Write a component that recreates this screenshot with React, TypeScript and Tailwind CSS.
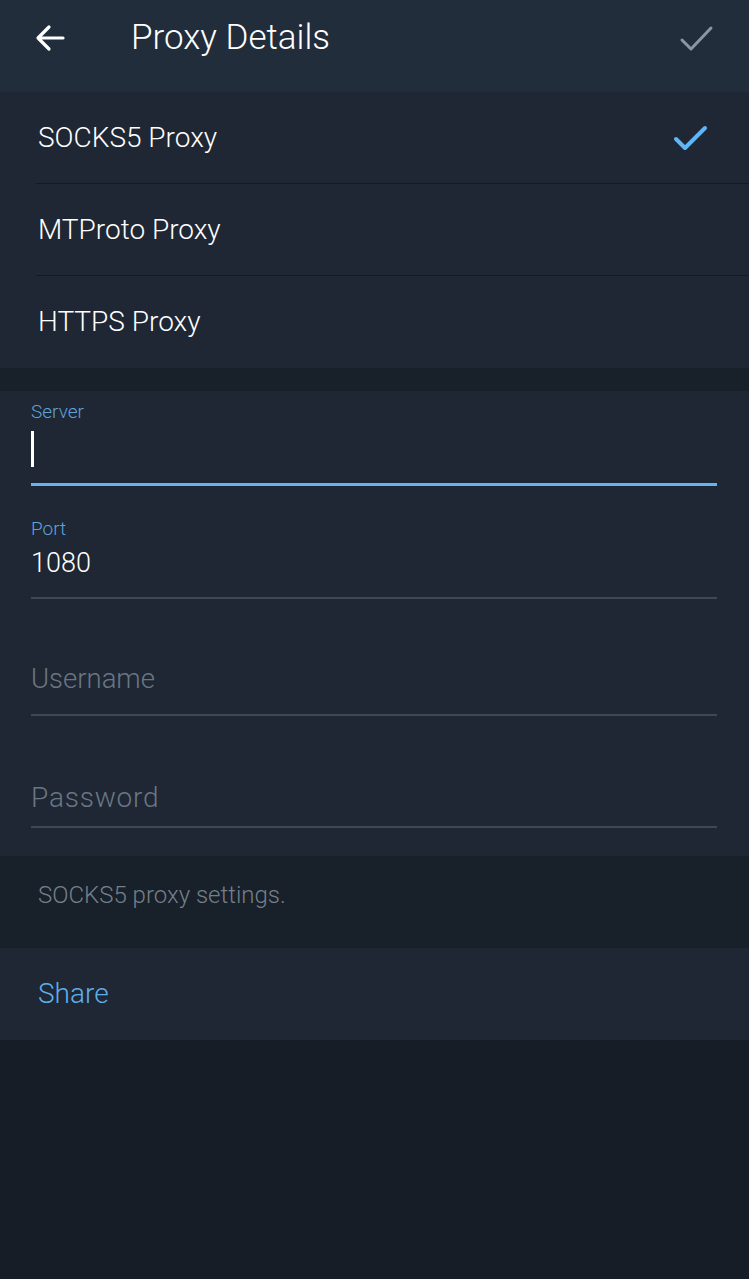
import React from "react";

const font = { fontFamily: "Roboto, 'Noto Sans', sans-serif" };

function Row({ label, checked, divider }: { label: string; checked?: boolean; divider?: boolean }) {
  return (
    <div className="relative flex h-[92px] items-center pl-[38px] pr-[40px]">
      <span className="flex-1 text-[28px] font-light text-white">{label}</span>
      {checked && (
        <svg width="36" height="28" viewBox="0 0 36 28">
          <path d="M3 15 L12 24 L32 4" fill="none" stroke="#5eb5f7" strokeWidth="4" strokeLinecap="round" strokeLinejoin="round" />
        </svg>
      )}
      {divider && <div className="absolute bottom-0 left-[36px] right-0 h-px bg-[#121a23]" />}
    </div>
  );
}

export default function App() {
  return (
    <div className="flex min-h-[1279px] w-[749px] flex-col bg-[#161d26]" style={font}>
      {/* Header */}
      <div className="flex h-[92px] items-center bg-[#212d3b] pb-[16px]">
        <div className="flex w-[131px] items-center pl-[34px]">
          <svg width="32" height="30" viewBox="0 0 32 30">
            <path d="M29 15 H4 M15 4 L4 15 L15 26" fill="none" stroke="#ffffff" strokeWidth="3.2" strokeLinecap="round" strokeLinejoin="round" />
          </svg>
        </div>
        <span className="flex-1 text-[35px] font-light text-white">Proxy Details</span>
        <svg width="36" height="30" viewBox="0 0 36 30" className="mr-[34px]">
          <path d="M3 17 L12 26 L32 5" fill="none" stroke="#8a96a3" strokeWidth="3" strokeLinecap="round" strokeLinejoin="round" />
        </svg>
      </div>

      {/* Types */}
      <div className="bg-[#1e2733]">
        <Row label="SOCKS5 Proxy" checked divider />
        <Row label="MTProto Proxy" divider />
        <Row label="HTTPS Proxy" />
      </div>

      <div className="h-[23px] bg-[#18202a]" />

      {/* Fields */}
      <div className="flex h-[465px] flex-col bg-[#1e2733] pl-[31px] pr-[32px]">
        <div className="pt-[10px]">
          <div className="text-[19px] leading-[22px] font-light text-[#5fa3dc]">Server</div>
          <div className="mt-[8px] h-[36px] w-[3px] bg-white" />
          <div className="mt-[16px] h-[3px] bg-[#64b5ef]" />
        </div>
        <div className="pt-[32px]">
          <div className="text-[19px] leading-[22px] font-light text-[#5fa3dc]">Port</div>
          <div className="mt-[5px] text-[27px] leading-[36px] font-light text-white">1080</div>
          <div className="mt-[16px] h-[2px] bg-[#3b4857]" />
        </div>
        <div className="pt-[62px]">
          <div className="text-[27.5px] leading-[36px] font-light text-[#6a7684]">Username</div>
          <div className="mt-[17px] h-[2px] bg-[#3b4857]" />
        </div>
        <div className="pt-[64px]">
          <div className="text-[28px] leading-[36px] font-light tracking-[0.8px] text-[#6a7684]">Password</div>
          <div className="mt-[10px] h-[2px] bg-[#3b4857]" />
        </div>
      </div>

      <div className="flex h-[92px] items-center bg-[#18202a] pl-[38px] pb-[14px]">
        <span className="text-[24px] font-light text-[#747f8b]">SOCKS5 proxy settings.</span>
      </div>

      <div className="flex h-[92px] items-center bg-[#1e2733] pl-[38px]">
        <span className="text-[28px] font-light text-[#5eaeea]">Share</span>
      </div>

      <div className="flex-1 bg-[#161d26]" />
    </div>
  );
}
